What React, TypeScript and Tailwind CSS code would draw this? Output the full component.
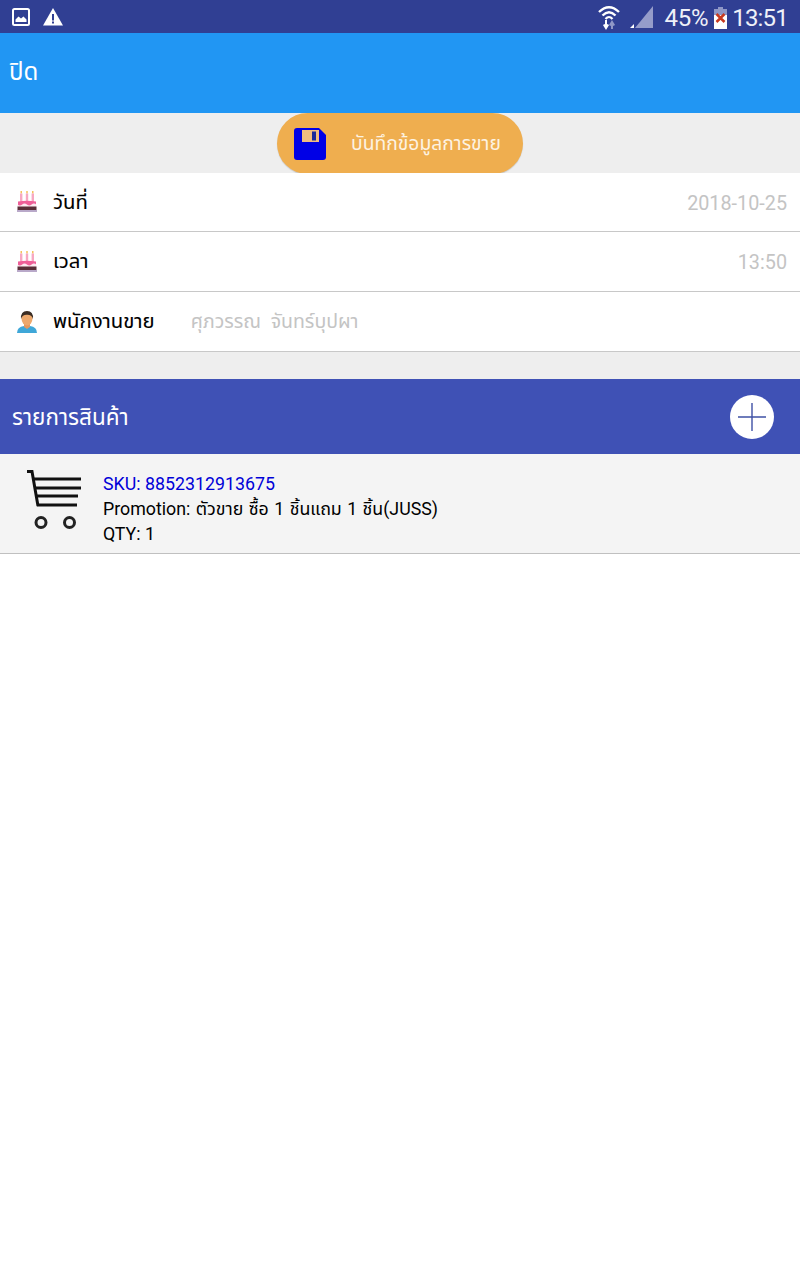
import React from 'react';

const font = "font-['Roboto','Noto_Sans','Noto_Sans_Thai','DejaVu_Sans',sans-serif]";

const CakeIcon = () => (
  <svg width="20" height="22" viewBox="0 0 20 22" className="shrink-0">
    <rect x="3.6" y="0" width="1.2" height="2.5" fill="#f2b233" />
    <rect x="9.4" y="0" width="1.2" height="2.5" fill="#f2b233" />
    <rect x="15.2" y="0" width="1.2" height="2.5" fill="#f2b233" />
    <rect x="3" y="2.5" width="2.4" height="8.5" fill="#f7a8c2" />
    <rect x="8.8" y="2.5" width="2.4" height="8.5" fill="#f7a8c2" />
    <rect x="14.6" y="2.5" width="2.4" height="8.5" fill="#f7a8c2" />
    <path d="M1 10.5 Q10 9 19 10.5 V15 H1 Z" fill="#ee5f98" />
    <path d="M0.5 13.5 q2.4 2 4.7 0 t4.7 0 t4.7 0 t4.7 0 V16 H0.5 Z" fill="#fdeaf0" />
    <rect x="0.5" y="15.5" width="19" height="3.5" fill="#5a2f38" />
    <rect x="0" y="19" width="20" height="2" fill="#b9a9c9" />
  </svg>
);

const PersonIcon = () => (
  <svg width="20" height="22" viewBox="0 0 20 22" className="shrink-0">
    <path d="M0 22 Q0 16 7 15 H13 Q20 16 20 22 Z" fill="#3fa7d8" />
    <path d="M7 12 H13 V16 L10 18 L7 16 Z" fill="#e3985f" />
    <ellipse cx="10" cy="7.5" rx="5.5" ry="7" fill="#eda86c" />
    <path d="M4 8 Q3.5 0 10 0 Q16.5 0 16 8 Q14.5 3.5 10 3.8 Q5.5 3.5 4 8 Z" fill="#3b2d24" />
  </svg>
);

const Row = ({ icon, label, className, children }: { icon: React.ReactNode; label: string; className: string; children: React.ReactNode }) => (
  <div className={`flex items-center border-b border-[#c8c8c8] bg-white pl-[17px] pr-[13px] ${className}`}>
    {icon}
    <span className="ml-[16px] shrink-0 text-[20.3px] leading-none text-black [-webkit-text-stroke:0.1px_black]">{label}</span>
    {children}
  </div>
);

export default function App() {
  return (
    <div className={`flex h-[1280px] w-[800px] flex-col overflow-hidden bg-white ${font}`}>
      {/* Status bar */}
      <div className="flex h-[33px] items-center justify-between bg-[#303f93] pl-[12px] pr-[12px] text-white">
        <div className="flex items-center gap-[13px]">
          <svg width="18" height="18" viewBox="0 0 18 18">
            <rect x="1" y="1" width="16" height="16" rx="1.5" fill="none" stroke="white" strokeWidth="2" />
            <path d="M3.5 14 L3.5 11.5 L6.5 8.5 L9 10.5 L11.5 8.5 L14.5 11.5 V14 Z" fill="white" />
          </svg>
          <svg width="20" height="18" viewBox="0 0 20 18">
            <path d="M10 0 L20 17.5 H0 Z" fill="white" />
            <rect x="9" y="6" width="2" height="6.5" fill="#303f93" />
            <rect x="9" y="13.5" width="2" height="2" fill="#303f93" />
          </svg>
        </div>
        <div className="flex items-center">
          <svg width="22" height="26" viewBox="0 0 22 26" className="mt-[2px]">
            <path d="M1 7 Q11 -2.5 21 7" fill="none" stroke="white" strokeWidth="2.4" />
            <path d="M4.5 10.5 Q11 4 17.5 10.5" fill="none" stroke="white" strokeWidth="2.4" />
            <path d="M7.5 14 Q11 10 14.5 14" fill="none" stroke="white" strokeWidth="2.2" />
            <path d="M8 15 V21 M5.8 19.5 L8 23 L10.2 19.5" fill="none" stroke="white" strokeWidth="2" />
            <path d="M14 24 V18 M11.8 20.5 L14 17 L16.2 20.5" fill="none" stroke="#8f97c6" strokeWidth="2" />
          </svg>
          <svg width="23" height="23" viewBox="0 0 23 23" className="ml-[10px] mt-[1px]">
            <path d="M23 0 V22 H5 Z" fill="#959cca" />
            <path d="M0 22 L4 18 V22 Z" fill="white" />
          </svg>
          <span className="ml-[12px] mt-[2px] text-[24px] leading-none tracking-[-0.3px] text-[#eef0f8]">45%</span>
          <svg width="13" height="22" viewBox="0 0 13 22" className="ml-[6px] mt-[3px]">
            <rect x="4" y="0" width="5" height="2" fill="#8f97c6" />
            <rect x="0" y="2" width="13" height="6" fill="#8f97c6" />
            <rect x="0" y="8" width="13" height="14" fill="white" />
            <path d="M2.5 7 L10.5 15 M10.5 7 L2.5 15" stroke="#c8391f" strokeWidth="2.5" />
          </svg>
          <span className="ml-[5px] mt-[2px] text-[24px] leading-none tracking-[-0.8px] text-[#eef0f8]">13:51</span>
        </div>
      </div>

      {/* App bar */}
      <div className="flex h-[80px] items-center bg-[#2196f3] pl-[9px] pb-[2px] text-[24px] text-white">ปิด</div>

      {/* Save button strip */}
      <div className="flex h-[60px] justify-center bg-[#eeeeee]">
        <div className="flex h-[61px] w-[246px] items-center rounded-full bg-[#efae4f] pl-[17px] shadow-[0_1px_1px_rgba(0,0,0,0.15)]">
          <svg width="32" height="32" viewBox="0 0 32 32" className="shrink-0">
            <path d="M3 0 H25 L32 7 V29 Q32 32 29 32 H3 Q0 32 0 29 V3 Q0 0 3 0 Z" fill="#0000e6" />
            <rect x="8" y="2" width="17" height="12" fill="#f0bc80" />
            <rect x="18" y="3.5" width="4" height="9" fill="#1a2a9a" />
          </svg>
          <span className="ml-[25px] text-[19.3px] leading-none text-[#fdf3e2]">บันทึกข้อมูลการขาย</span>
        </div>
      </div>

      {/* Form rows */}
      <Row className="h-[59px]" icon={<CakeIcon />} label="วันที่">
        <span className="ml-auto mt-[3px] text-[19.8px] leading-none text-[#c4c4c4]">2018-10-25</span>
      </Row>
      <Row className="h-[60px]" icon={<CakeIcon />} label="เวลา">
        <span className="ml-auto mt-[2px] text-[19.8px] leading-none text-[#c4c4c4]">13:50</span>
      </Row>
      <Row className="h-[60px]" icon={<PersonIcon />} label="พนักงานขาย">
        <span className="ml-[36px] whitespace-pre text-[19.5px] leading-none text-[#c4c4c4]">ศุภวรรณ  จันทร์บุปผา</span>
      </Row>

      <div className="h-[27px] bg-[#eeeeee]" />

      {/* Product list header */}
      <div className="flex h-[75px] items-center justify-between bg-[#3f51b5] pl-[12px] pr-[26px]">
        <span className="pt-[2px] text-[22.5px] leading-none text-white">รายการสินค้า</span>
        <div className="flex h-[44px] w-[44px] items-center justify-center rounded-full bg-white">
          <svg width="28" height="28" viewBox="0 0 28 28">
            <path d="M0 14 H28 M14 0 V28" stroke="#3f51a5" strokeWidth="1.4" />
          </svg>
        </div>
      </div>

      {/* Product row */}
      <div className="flex h-[100px] items-start border-b border-[#c0c0c0] bg-[#f4f4f4] pl-[26px] pt-[16px]">
        <svg width="56" height="60" viewBox="0 0 56 60" className="shrink-0">
          <path d="M1 1.5 H6 L12 36" fill="none" stroke="#111" strokeWidth="3" />
          <path d="M7 9 H55 M8.5 18 H55 M10 26 H52 M11 35 H51" fill="none" stroke="#111" strokeWidth="2.8" />
          <circle cx="15" cy="52.5" r="5" fill="none" stroke="#222" strokeWidth="3" />
          <circle cx="43.5" cy="52.5" r="5" fill="none" stroke="#222" strokeWidth="3" />
        </svg>
        <div className="ml-[21px] mt-[1px] flex flex-col text-[17.8px] leading-[25px] text-black">
          <span className="text-[#0000d8]">SKU: 8852312913675</span>
          <span className="[word-spacing:1px]">Promotion: ตัวขาย ซื้อ 1 ชิ้นแถม 1 ชิ้น(JUSS)</span>
          <span>QTY: 1</span>
        </div>
      </div>
    </div>
  );
}
